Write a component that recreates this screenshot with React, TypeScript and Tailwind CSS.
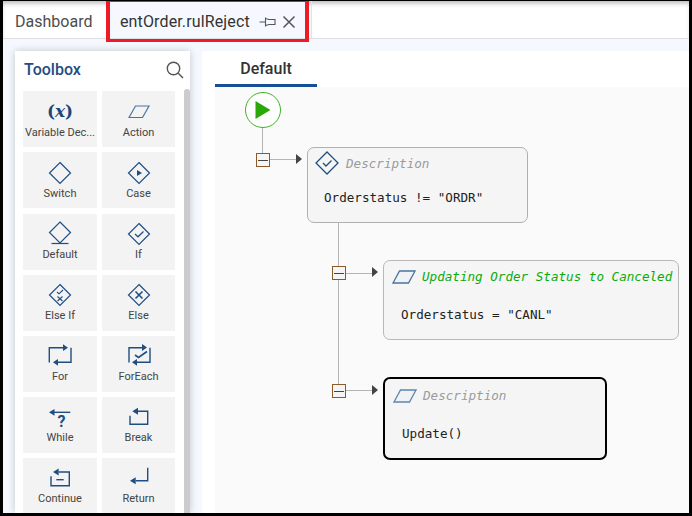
import React from "react";

const C = "#1f4e82";

function Ico({ children }: { children?: React.ReactNode }) {
  return (
    <svg width="30" height="30" viewBox="0 0 30 30" fill="none" stroke={C} strokeWidth="1.2">
      {children}
    </svg>
  );
}
const Diamond = () => <path d="M15 4.5 L25.5 15 L15 25.5 L4.5 15 Z" />;
const Head = ({ d }: { d: string }) => <path d={d} fill={C} stroke="none" />;

const tools: [string, React.ReactNode][] = [
  [
    "Variable Dec...",
    <div className="flex h-[30px] items-center justify-center font-['DejaVu_Serif',serif] text-[17px] font-bold italic leading-none text-[#1c4679]">
      <span className="not-italic">(</span>
      <span>x</span>
      <span className="not-italic">)</span>
    </div>,
  ],
  ["Action", <Ico><path d="M5 20.5 L11.5 9 H25 L18.5 20.5 Z" stroke="#4a74a0" /></Ico>],
  ["Switch", <Ico><Diamond /></Ico>],
  ["Case", <Ico><Diamond /><Head d="M13 12 L18 15 L13 18 Z" /></Ico>],
  ["Default", <Ico><path d="M15 3 L25.5 13.5 L15 24 L4.5 13.5 Z" /><path d="M6.5 24.5 H23.5" /></Ico>],
  ["If", <Ico><Diamond /><path d="M11 15 L14 17.8 L19.5 12.5" /></Ico>],
  [
    "Else If",
    <Ico>
      <Diamond />
      <path d="M12 12 L14 13.8 L18 10" strokeWidth="1.1" />
      <path d="M12.5 16.5 L17.5 21 M17.5 16.5 L12.5 21" strokeWidth="1.1" />
    </Ico>,
  ],
  ["Else", <Ico><Diamond /><path d="M11.5 11.5 L18.5 18.5 M18.5 11.5 L11.5 18.5" strokeWidth="1.6" /></Ico>],
  [
    "For",
    <Ico>
      <path d="M4.3 21.5 V6.7 H18 M26 6.7 V21.3 H13" strokeWidth="1.4" />
      <Head d="M18 3.3 L23 6.7 L18 10 Z" />
      <Head d="M13 18 L8 21.3 L13 24.7 Z" />
    </Ico>,
  ],
  [
    "ForEach",
    <Ico>
      <path d="M5 21.5 V6.7 H18 M26 6.7 V21.3 H13" strokeWidth="1.4" />
      <Head d="M18 3 L23 6.5 L18 10 Z" />
      <Head d="M13 18 L8 21.3 L13 24.7 Z" />
      <path d="M11 14 L14.5 16.5 L23 10.5" strokeWidth="1.6" />
    </Ico>,
  ],
  [
    "While",
    <Ico>
      <path d="M9 10.3 H25.3" strokeWidth="1.4" />
      <Head d="M9.5 7 L4 10.3 L9.5 13.7 Z" />
      <text x="16.5" y="25" textAnchor="middle" fontSize="16" fontWeight="700" fontFamily="Roboto, sans-serif" fill={C} stroke="none">?</text>
    </Ico>,
  ],
  [
    "Break",
    <Ico>
      <path d="M14 9.3 H23.7 V22.3 H6 V13.7" strokeWidth="1.4" />
      <Head d="M14 5.8 L8.3 9.3 L14 12.8 Z" />
    </Ico>,
  ],
  [
    "Continue",
    <Ico>
      <path d="M13.7 9 H24.3 V22.7 H6 V13.3" strokeWidth="1.4" />
      <Head d="M13.7 5.5 L8 9 L13.7 12.5 Z" />
      <path d="M11.3 16.7 H18.7" strokeWidth="1.4" />
    </Ico>,
  ],
  [
    "Return",
    <Ico>
      <path d="M23.7 4.7 V17.7 H11.7" strokeWidth="1.4" />
      <Head d="M11.7 14.2 L6 17.7 L11.7 21.2 Z" />
    </Ico>,
  ],
];

function Para({ stroke = "#4a74a0" }: { stroke?: string }) {
  return (
    <svg width="24" height="14" viewBox="0 0 24 14" fill="none" stroke={stroke} strokeWidth="1.3">
      <path d="M1 13 L7.5 1 H23 L16.5 13 Z" fill="#e9eef4" fillOpacity="0.4" />
    </svg>
  );
}

function Toggle({ className }: { className: string }) {
  return (
    <div className={`absolute flex h-[14px] w-[14px] items-center justify-center border border-[#8a5a2b] bg-[#f5f5f5] ${className}`}>
      <div className="h-px w-[10px] bg-[#444]" />
    </div>
  );
}

function Arrow({ className }: { className: string }) {
  return (
    <div className={`absolute h-0 w-0 border-y-[5.5px] border-l-[6px] border-y-transparent border-l-[#444] ${className}`} />
  );
}

const mono = "font-['DejaVu_Sans_Mono',monospace] text-[12.6px]";

export default function App() {
  return (
    <div className="relative flex h-[516px] w-[692px] flex-col overflow-hidden border-x-[3px] border-t-[1px] border-b-[3px] border-black bg-white font-['Roboto',sans-serif]">
      {/* tab bar */}
      <div className="relative flex h-[38px] shrink-0 border-b border-[#dddde2] bg-white shadow-[inset_0_4px_5px_-2px_rgba(0,0,0,0.3)]">
        <div className="flex w-[104px] items-center pl-[12px] pt-[4px] text-[16px] tracking-[0.02px] text-[#4d4d4d]">Dashboard</div>
        <div className="flex w-[201px] items-center bg-[#f5f9ff] pl-[13px] pt-[4px] text-[16px] tracking-[0.13px] text-[#333]">
          entOrder.rulReject
          <svg className="ml-[9px]" width="17" height="12" viewBox="0 0 17 12" fill="none" stroke="#555" strokeWidth="1.1">
            <path d="M0.5 6 H6.5 M6.5 1.5 V10.5 M6.5 2.5 L10 3.5 H16 V8.5 H10 L6.5 9.5" />
          </svg>
          <svg className="ml-[6px]" width="14" height="14" viewBox="0 0 14 14" fill="none" stroke="#555" strokeWidth="1.5">
            <path d="M1.5 1.5 L12.5 12.5 M12.5 1.5 L1.5 12.5" />
          </svg>
        </div>
        <div className="ml-[3px] w-px bg-[#e3e3e6]" />
        <div className="absolute left-[103px] top-[-1px] h-[42px] w-[203px] border-x-4 border-t-2 border-b-[3px] border-[#ed1c24]" />
      </div>

      {/* body */}
      <div className="flex min-h-0 flex-1 bg-[#f5f9ff] pl-[12px] pt-[12px]">
        {/* toolbox */}
        <div className="relative w-[175px] shrink-0 overflow-hidden bg-white shadow-[0_0_8px_rgba(0,0,0,0.2)]">
          <div className="flex h-[40.2px] items-center justify-between pb-[3px] pl-[9px] pr-[6px]">
            <span className="text-[16px] font-medium text-[#1f4e82]">Toolbox</span>
            <svg width="18" height="18" viewBox="0 0 18 18" fill="none" stroke="#555" strokeWidth="1.4">
              <circle cx="7.5" cy="7.5" r="6.2" />
              <path d="M12 12 L17 17" />
            </svg>
          </div>
          <div className="grid w-[152px] grid-cols-[74px_73px] gap-x-[5px] gap-y-[5.16px] pl-[8px]">
            {tools.map(([name, icon]) => (
              <div key={name} className="flex h-[56px] flex-col items-center bg-[#f3f3f3] pt-[5.32px]">
                {icon}
                <div className="-mt-px w-full whitespace-nowrap text-center text-[11px] leading-[14px] text-[#444]">{name}</div>
              </div>
            ))}
          </div>
          <div className="absolute right-0 top-[38px] bottom-0 w-[6px] rounded-t-[3px] bg-[#cccccc]" />
        </div>

        {/* designer */}
        <div className="ml-[12px] flex min-w-0 flex-1 flex-col bg-white pl-[13px]">
          <div className="h-[36px] w-[102px] shrink-0 border-b-[3px] border-[#164f96] pt-[7px] text-center text-[16px] font-medium leading-[22px] text-[#333]">
            Default
          </div>
          {/* canvas: origin at page x=215 y=87 */}
          <div className="relative flex-1 bg-[#fafafa]">
            {/* start */}
            <div className="absolute left-[30px] top-[5px] flex h-[36px] w-[36px] items-center justify-center rounded-full border-[1.5px] border-[#3cb521] bg-white">
              <svg width="16" height="18" viewBox="0 0 16 18">
                <path d="M0.5 0 L15.5 9 L0.5 18 Z" fill="#2aa80a" />
              </svg>
            </div>
            {/* connectors */}
            <div className="absolute left-[47px] top-[41px] h-[25px] w-px bg-[#b4b4b4]" />
            <div className="absolute left-[55px] top-[72px] h-px w-[27px] bg-[#b4b4b4]" />
            <Toggle className="left-[41px] top-[66px]" />
            <Arrow className="left-[81px] top-[67px]" />

            <div className="absolute left-[123px] top-[136px] h-[168px] w-px bg-[#b4b4b4]" />
            <div className="absolute left-[131px] top-[186px] h-px w-[27px] bg-[#b4b4b4]" />
            <Toggle className="left-[117px] top-[179px]" />
            <Arrow className="left-[157px] top-[180px]" />
            <div className="absolute left-[131px] top-[303px] h-px w-[27px] bg-[#b4b4b4]" />
            <Toggle className="left-[117px] top-[297px]" />
            <Arrow className="left-[157px] top-[298px]" />

            {/* if node */}
            <div className="absolute left-[92px] top-[60px] h-[76px] w-[221px] rounded-[7px] border-[1.5px] border-[#b0b0b0] bg-[#f5f5f5] pl-[7px] pt-[3px]">
              <div className="flex h-[24px] items-center gap-[7px]">
                <svg width="24" height="24" viewBox="0 0 24 24" fill="none" stroke="#1f4e82" strokeWidth="1.3">
                  <path d="M12 1 L23 12 L12 23 L1 12 Z" />
                  <path d="M8 12 L11 15 L16.5 9.5" />
                </svg>
                <span className={`${mono} pt-[2px] italic text-[#9a9a9a]`}>Description</span>
              </div>
              <div className={`${mono} mt-[13px] pl-[9px] leading-[20px] text-[#222]`}>Orderstatus != "ORDR"</div>
            </div>

            {/* action node */}
            <div className="absolute left-[168px] top-[173px] h-[80px] w-[296px] rounded-[7px] border-[1.5px] border-[#b8b8b8] bg-[#f5f5f5] pl-[8px] pt-[7px]">
              <div className="flex h-[18px] items-center gap-[6px]">
                <Para />
                <span className={`${mono} whitespace-nowrap italic text-[#0aaa0a]`}>Updating Order Status to Canceled</span>
              </div>
              <div className={`${mono} mt-[19px] pl-[9px] leading-[20px] text-[#222]`}>Orderstatus = "CANL"</div>
            </div>

            {/* selected node */}
            <div className="absolute left-[168px] top-[290px] h-[83px] w-[224px] rounded-[7px] border-2 border-black bg-[#f5f5f5] pl-[8px] pt-[8px]">
              <div className="flex h-[18px] items-center gap-[6px]">
                <Para stroke="#5f86ad" />
                <span className={`${mono} italic text-[#9a9a9a]`}>Description</span>
              </div>
              <div className={`${mono} mt-[19px] pl-[9px] leading-[20px] text-[#222]`}>Update()</div>
            </div>
          </div>
        </div>
      </div>
    </div>
  );
}
